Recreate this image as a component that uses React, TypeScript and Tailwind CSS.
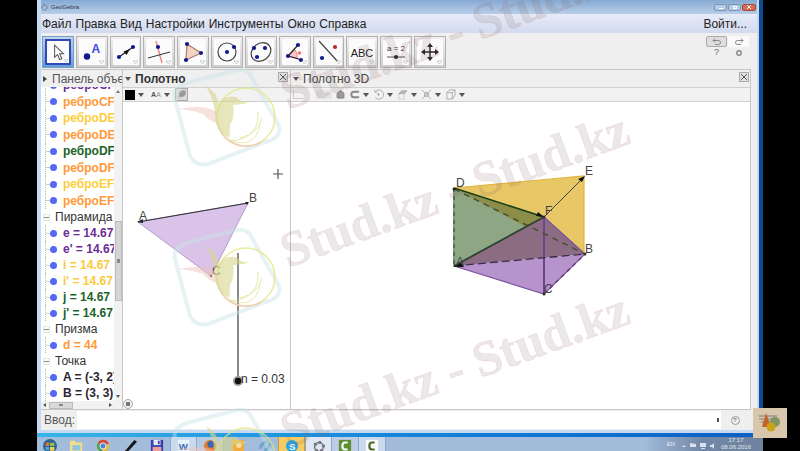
import React from "react";
import { House } from "lucide-react";

const NAVY = "#101a8c";

function Dot({ x, y, c = NAVY }: { x: number; y: number; c?: string }) {
  return <circle cx={x} cy={y} r="2.1" fill={c} />;
}

const tools: { name: string; icon: React.ReactNode }[] = [
  {
    name: "Перемещать",
    icon: <path d="M9 5v14l3.500-3 2.500 6 2.500-1-2.500-6h4.500z" fill="#fff" stroke="#555" strokeWidth="1.200" />,
  },
  {
    name: "Точка",
    icon: (
      <>
        <circle cx="8" cy="17.500" r="3.200" fill={NAVY} />
        <text x="12.500" y="14" fontSize="12" fontWeight="bold" fill="#3a48e8">A</text>
      </>
    ),
  },
  {
    name: "Прямая",
    icon: (
      <>
        <path d="M6 18 20 8" stroke="#222" strokeWidth="1.200" />
        <path d="m10.500 12.500 6.500-2.500-3.500 6z" fill="#111" />
        <Dot x={6} y={18} />
        <Dot x={20} y={8} />
      </>
    ),
  },
  {
    name: "Перпендикулярная прямая",
    icon: (
      <>
        <path d="m10 2 6 22" stroke="#f08a84" strokeWidth="1.500" />
        <path d="m2 19 22-6" stroke="#333" />
        <Dot x={12} y={8} />
      </>
    ),
  },
  {
    name: "Многоугольник",
    icon: (
      <>
        <path d="M7 5 21 14 6 21z" fill="#f3d5c8" stroke="#b07c68" strokeWidth="1.200" />
        <Dot x={7} y={5} />
        <Dot x={21} y={14} />
        <Dot x={6} y={21} />
      </>
    ),
  },
  {
    name: "Окружность",
    icon: (
      <>
        <circle cx="13" cy="13" r="9" fill="none" stroke="#444" strokeWidth="1.200" />
        <Dot x={13} y={13} />
        <Dot x={20} y={8} />
      </>
    ),
  },
  {
    name: "Эллипс",
    icon: (
      <>
        <ellipse cx="13" cy="13" rx="10.500" ry="8.500" transform="rotate(-38 13 13)" fill="none" stroke="#444" strokeWidth="1.200" />
        <Dot x={6} y={9} />
        <Dot x={17} y={9} />
        <Dot x={9} y={18} />
      </>
    ),
  },
  {
    name: "Угол",
    icon: (
      <>
        <path d="M6 17 13 11q3 3 2 8z" fill="#f9c7c7" stroke="#e88" />
        <path d="M16 6 6 17l14 4" fill="none" stroke="#222" strokeWidth="1.200" />
        <circle cx="17.500" cy="14" r="1.800" fill="#ee7777" />
        <Dot x={16} y={6} />
        <Dot x={6} y={17} />
        <Dot x={19} y={21} />
      </>
    ),
  },
  {
    name: "Отражение",
    icon: (
      <>
        <path d="M3 2 23 24" stroke="#444" strokeWidth="1.200" />
        <Dot x={19} y={8} c="#b03020" />
        <Dot x={6} y={19} />
      </>
    ),
  },
  {
    name: "Текст",
    icon: <text x="13" y="17.500" fontSize="11" textAnchor="middle" fill="#222">ABC</text>,
  },
  {
    name: "Ползунок",
    icon: (
      <>
        <text x="13" y="12" fontSize="8" textAnchor="middle" fill="#333">a = 2</text>
        <path d="M4 18h18" stroke="#555" />
        <circle cx="13" cy="18" r="2" fill="#222" />
      </>
    ),
  },
  {
    name: "Переместить полотно",
    icon: (
      <>
        <path d="M13 7v12M7 13h12" stroke="#222" strokeWidth="1.400" />
        <path d="m13 4 3 4h-6zM13 22l3-4h-6zM4 13l4-3v6zM22 13l-4-3v6z" fill="#222" />
      </>
    ),
  },
];

function ToolBar() {
  return (
    <div className="flex h-[36px] shrink-0 items-start justify-between pt-[3px] pr-[2px] pl-px">
      <div className="flex w-[404px] gap-[2px]">
        {tools.map((t, i) => (
          <button
            key={t.name}
            aria-label={t.name}
            className={
              i === 0
                ? "flex h-8 flex-1 items-center justify-center border border-[#7d9cc0] bg-gradient-to-b from-[#bcd5ee] to-[#5d9fdc]"
                : "flex h-8 flex-1 items-center justify-center border border-[#b3b3b3] bg-gradient-to-b from-[#efefef] to-[#cfcfcf]"
            }
          >
            <svg
              viewBox="0 0 26 26"
              className={i === 0 ? "size-[26px] border-2 border-[#3449b4] bg-[#fbfbfb]" : "size-[26px] bg-[#fbfbfb]"}
            >
              {t.icon}
              <path d="M20 22h5l-2.500 3z" fill="#fff" stroke="#bbb" strokeWidth=".7" />
            </svg>
          </button>
        ))}
      </div>
      <div className="grid grid-cols-2 gap-x-px text-[#666]">
        <button aria-label="Отменить" className="flex h-[11px] w-[21px] items-center justify-center rounded-xs border border-[#aaa] bg-[#dedede]">
          <svg viewBox="0 0 10 8" className="h-2 w-[10px]" fill="none" stroke="#888"><path d="M1 2.500h5.500a2 2 0 0 1 0 4H3M3 .500 1 2.500l2 2" /></svg>
        </button>
        <button aria-label="Повторить" className="flex h-[11px] w-[21px] items-center justify-center bg-[#fafafa]">
          <svg viewBox="0 0 10 8" className="h-2 w-[10px]" fill="none" stroke="#888"><path d="M9 2.500H3.500a2 2 0 0 0 0 4H7M7 .500l2 2-2 2" /></svg>
        </button>
        <button aria-label="Справка" className="h-[11px] text-[9px] leading-[11px]">?</button>
        <button aria-label="Параметры" className="flex h-[11px] items-center justify-center">
          <svg viewBox="0 0 8 8" className="size-2"><circle cx="4" cy="4" r="2.200" fill="none" stroke="#888" strokeWidth="1.400" /></svg>
        </button>
      </div>
    </div>
  );
}

function Caret() {
  return <svg viewBox="0 0 6 4" className="h-1 w-[6px] shrink-0"><path d="M0 0h6L3 4z" fill="#555" /></svg>;
}

function CloseBox({ label }: { label: string }) {
  return (
    <button aria-label={label} className="mb-1 ml-auto size-[10px] shrink-0 border border-[#aaa] bg-[#e2e2e2]">
      <svg viewBox="0 0 8 8" className="size-2"><path d="m1 1 6 6m0-6L1 7" stroke="#555" /></svg>
    </button>
  );
}

type Item = { text: string; color: string };

const edges: Item[] = [
  { text: "реброCF", color: "text-[#6a2e96]" },
  { text: "реброCF", color: "text-[#ff993a]" },
  { text: "реброDE", color: "text-[#fbcf3c]" },
  { text: "реброDE", color: "text-[#ff993a]" },
  { text: "реброDF", color: "text-[#1b6429]" },
  { text: "реброDF", color: "text-[#ff993a]" },
  { text: "реброEF", color: "text-[#fbcf3c]" },
  { text: "реброEF", color: "text-[#ff993a]" },
];

const groups: { title: string; items: Item[] }[] = [
  {
    title: "Пирамида",
    items: [
      { text: "e = 14.67", color: "text-[#6a2e96]" },
      { text: "e' = 14.67", color: "text-[#6a2e96]" },
      { text: "i = 14.67", color: "text-[#fbc93c]" },
      { text: "i' = 14.67", color: "text-[#fbc93c]" },
      { text: "j = 14.67", color: "text-[#1b6429]" },
      { text: "j' = 14.67", color: "text-[#1b6429]" },
    ],
  },
  { title: "Призма", items: [{ text: "d = 44", color: "text-[#ff993a]" }] },
  {
    title: "Точка",
    items: [
      { text: "A = (-3, 2)", color: "text-[#2b2530]" },
      { text: "B = (3, 3)", color: "text-[#2b2530]" },
    ],
  },
];

function Row({ item }: { item: Item }) {
  return (
    <li className="flex h-4 items-center pl-1 text-[12px] leading-4 font-bold whitespace-nowrap">
      <span className="h-full shrink-0 border-l border-dotted border-[#bbb]" />
      <span className="w-1 shrink-0 border-t border-[#ccc]" />
      <span className="size-[7px] shrink-0 rounded-full bg-[#5468f4]" />
      <span className={`ml-[6px] shrink-0 ${item.color}`}>{item.text}</span>
    </li>
  );
}

function Algebra() {
  return (
    <section className="flex w-[82px] shrink-0 flex-col border-r border-[#c6c6c6] bg-white">
      <header className="flex h-[17px] shrink-0 items-center gap-[5px] overflow-hidden bg-[#efefef] pl-[2px] text-[12px] whitespace-nowrap text-[#555]">
        <svg viewBox="0 0 4 6" className="h-[6px] w-1 shrink-0"><path d="M0 0v6l4-3z" fill="#444" /></svg>
        <span>Панель объектов</span>
      </header>
      <div className="flex min-h-0 flex-1">
        <div className="flex min-w-0 flex-1 flex-col justify-end overflow-hidden">
          <ul className="flex h-[132px] shrink-0 flex-col justify-between">
            {edges.map((e, i) => <Row key={i} item={e} />)}
          </ul>
          {groups.map((g) => (
            <div key={g.title} className="shrink-0">
              <h3 className="flex h-4 items-center gap-[5px] pl-[2px] text-[12px] leading-4 text-[#333]">
                <span className="flex size-[7px] shrink-0 items-center border border-[#e2e2e2]"><i className="h-px w-full bg-[#888]" /></span>
                {g.title}
              </h3>
              <ul>{g.items.map((e) => <Row key={e.text} item={e} />)}</ul>
            </div>
          ))}
        </div>
        <div className="flex w-2 shrink-0 flex-col items-center bg-[#f2f2f2] py-[3px]">
          <svg viewBox="0 0 4 3" className="h-[3px] w-1 shrink-0"><path d="M0 3h4L2 0z" fill="#777" /></svg>
          <div className="mt-32 flex h-20 w-[7px] shrink-0 items-center justify-center border border-[#bbb] bg-[#d5d5d5]"><i className="h-1 w-[3px] bg-[#888]" /></div>
          <svg viewBox="0 0 4 3" className="mt-auto h-[3px] w-1 shrink-0"><path d="M0 0h4L2 3z" fill="#555" /></svg>
        </div>
      </div>
      <div className="flex h-2 shrink-0 items-center bg-[#f2f2f2] px-[2px]">
        <svg viewBox="0 0 3 4" className="h-1 w-[3px]"><path d="M3 0v4L0 2z" fill="#555" /></svg>
        <div className="ml-[3px] flex h-[7px] w-6 items-center justify-center border border-[#bbb] bg-[#d9d9d9]"><i className="h-[2px] w-1 bg-[#888]" /></div>
        <svg viewBox="0 0 3 4" className="mr-2 ml-auto h-1 w-[3px]"><path d="M0 0v4l3-2z" fill="#555" /></svg>
      </div>
    </section>
  );
}

function Plane() {
  return (
    <section className="flex w-[168px] shrink-0 flex-col border-r border-[#c6c6c6]">
      <header className="flex h-[17px] shrink-0 items-center gap-1 bg-[#efefef] px-[2px] text-[12px] font-bold text-[#333]">
        <Caret />
        <span>Полотно</span>
        <CloseBox label="Закрыть полотно" />
      </header>
      <div className="flex h-[15px] shrink-0 items-center gap-[3px] border-y border-[#cfcfcf] bg-[#f2f2f2] pl-[2px]">
        <button aria-label="Цвет" className="size-[10px] bg-black" />
        <Caret />
        <button aria-label="Размер шрифта" className="ml-1 text-[7px] leading-none font-bold text-[#555]">A<span className="text-[#aaa]">A</span></button>
        <Caret />
        <button aria-label="Закрепить" className="ml-[2px] flex size-[13px] items-center justify-center border border-[#aaa] bg-[#dadada]">
          <svg viewBox="0 0 10 10" className="size-[9px]"><path d="M5 1h4v4L7 7H3V3zM3 7 1 9" fill="#999" stroke="#999" /></svg>
        </button>
      </div>
      <div className="relative min-h-0 flex-1 bg-white">
        <svg viewBox="123 102 167 307" preserveAspectRatio="xMinYMin slice" className="absolute size-full">
          <path d="M138 222 248 203 211 276z" fill="#d9c3e8" stroke="#b79ace" />
          <path d="M138 222 248 203" stroke="#333" strokeWidth="1.200" />
          <path d="m137 222 6-3v4zM249 202l-4 0 2 3z" fill="#222" />
          <circle cx="211" cy="276" r="1.300" fill="#444" />
          <g fontSize="12" fill="#444">
            <text x="139" y="220">A</text>
            <text x="249" y="202">B</text>
            <text x="212" y="275">C</text>
          </g>
          <path d="M273 174h10M278 169v10" stroke="#555" strokeWidth="1.200" />
          <path d="M238 253v125" stroke="#8a8a8a" strokeWidth="2" />
          <circle cx="238" cy="381" r="5" fill="#999" />
          <circle cx="238" cy="381" r="3.200" fill="#111" />
          <circle cx="128" cy="404" r="4.500" fill="#f2f2f2" stroke="#aaa" />
          <path d="M126 402h4v4h-4z" fill="#777" />
        </svg>
        <label htmlFor="n" className="absolute top-[269px] left-[118px] text-[12px] leading-4 text-[#333]">n = 0.03</label>
        <input id="n" type="range" min="0" max="1" step="0.01" defaultValue="0.03" className="absolute top-[150px] left-[109px] h-[135px] w-3 opacity-0 [direction:rtl] [writing-mode:vertical-lr]" />
      </div>
    </section>
  );
}

const viewMenus: { name: string; icon: React.ReactNode }[] = [
  { name: "Привязка", icon: <path d="M11 3H5.500a3 3 0 0 0 0 6H11" strokeWidth="2" stroke="#888" /> },
  { name: "Вращение", icon: <><path d="M2.500 3a5 5 0 1 1 0 6M2 1v2.500h3" /><circle cx="6" cy="6" r="1" fill="#888" stroke="none" /></> },
  { name: "Направление вида", icon: <><path d="M2 5v6h6V5z" strokeOpacity=".5" /><path d="m2 5 3-3h6L8 5z" fill="#bbb" /></> },
  { name: "Отсечение", icon: <><path d="m1 1 3 3m4 4 3 3m0-10L8 4M4 8l-3 3" /><path d="M4 4h4v4H4z" fill="#ccc" /></> },
  { name: "Проекция", icon: <path d="M2 4v7h6V4zM2 4l3-3h6v6l-3 4M8 4l3-3" /> },
];

function Space() {
  return (
    <section className="flex min-w-0 flex-1 flex-col">
      <header className="flex h-[17px] shrink-0 items-center gap-1 bg-[#efefef] pr-px pl-[2px] text-[12px] text-[#444]">
        <Caret />
        <span>Полотно 3D</span>
        <CloseBox label="Закрыть полотно 3D" />
      </header>
      <div className="flex h-[15px] shrink-0 items-center border-y border-[#cfcfcf] bg-[#f2f2f2] pl-[2px]">
        <button aria-label="Оси" className="h-[9px] w-[11px] border-b border-l border-[#ccc]" />
        <button aria-label="Сетка" className="ml-3 h-[9px] w-4 bg-[#e4e4e4]" />
        <button aria-label="Исходный вид" className="ml-1"><House size={9} strokeWidth={3} fill="#999" className="text-[#888]" /></button>
        <div className="ml-1 flex">
          {viewMenus.map(({ name, icon }) => (
            <button key={name} aria-label={name} className="flex w-6 items-center gap-[3px]">
              <svg viewBox="0 0 12 12" className="size-[11px]" fill="none" stroke="#aaa">{icon}</svg>
              <Caret />
            </button>
          ))}
        </div>
      </div>
      <div className="relative min-h-0 flex-1 bg-white">
        <svg viewBox="291 102 460 307" preserveAspectRatio="xMinYMin slice" className="absolute size-full">
          <path d="M454 188 584 176V254L544 217z" fill="#e8c866" />
          <path d="M454 188 544 217 585 254z" fill="#b9a455" />
          <path d="M454 188 544 217 454 266z" fill="#8fa684" />
          <path d="M454 188 544 217 526 227z" fill="#8b8d48" />
          <path d="M454 266 585 254 544 294z" fill="#b793cb" />
          <path d="M454 266 544 217 585 254z" fill="#8c6c82" />
          <path d="M544 217V294" stroke="#6d4490" strokeWidth="2" />
          <path d="M454 266 544 294 585 254 544 217" fill="none" stroke="#7d52a0" strokeWidth="1.200" />
          <path d="M454 188 584 176V254" fill="none" stroke="#e0b53c" strokeWidth="1.200" />
          <path d="M454 188V266" stroke="#7c9c78" strokeWidth="2" />
          <path d="M454 188V266" stroke="#47604a" strokeWidth="1.500" strokeDasharray="4 4" />
          <path d="M454 189 585 254" stroke="#46502c" strokeWidth="1.500" strokeDasharray="6 5" />
          <path d="M454 266 585 254" stroke="#3d2b4d" strokeWidth="1.300" strokeDasharray="8 4" />
          <path d="M544 294 585 254" stroke="#62407c" strokeWidth="1.500" strokeDasharray="4 4" />
          <path d="M454 188 544 217" stroke="#173f17" strokeWidth="1.500" />
          <path d="M454 266 544 217" stroke="#2b4230" strokeWidth="1.800" />
          <path d="M544 217 584 177" stroke="#444" />
          <path d="m585 176-3 6-4-3zM544 217l-8-1 2-4zM453 267l8-4 3 4z" fill="#111" />
          <circle cx="454" cy="189" r="1.500" fill="#222" />
          <circle cx="544" cy="217" r="1.500" fill="#432050" />
          <circle cx="585" cy="254" r="1.500" fill="#333" />
          <circle cx="544" cy="294" r="1.500" fill="#333" />
          <g fontSize="12" fill="#444">
            <text x="456" y="187">D</text>
            <text x="585" y="175">E</text>
            <text x="545" y="215">F</text>
            <text x="456" y="266">A</text>
            <text x="585" y="253">B</text>
            <text x="544" y="293">C</text>
          </g>
        </svg>
      </div>
    </section>
  );
}

const apps: { name: string; cell: string; icon: React.ReactNode }[] = [
  { name: "Пуск", cell: "", icon: <><circle cx="8" cy="8" r="8" fill="#2d6592" /><path d="M3 5q2-2 4-1v4H3z" fill="#e8713a" /><path d="M8 4q2 1 5 0v4H8z" fill="#8fc346" /><path d="M3 9h4v4q-2-1-4 0z" fill="#4ba4e0" /><path d="M8 9h5v4q-2 1-5 0z" fill="#f6cd45" /></> },
  { name: "Проводник", cell: "", icon: <><path d="M1 2h6l1 2h7v12H1z" fill="#f3dc8c" /><path d="M4 7h9v6H4z" fill="#8cc5dc" /></> },
  { name: "Chrome", cell: "", icon: <><circle cx="8" cy="8" r="7" fill="#e5bd3c" /><path d="M8 8 2 4.500A7 7 0 0 1 14.500 5z" fill="#d64a3c" /><path d="M8 8 2 4.500A7 7 0 0 0 7 15z" fill="#50a055" /><circle cx="8" cy="8" r="3.500" fill="#4d86d8" stroke="#fff" /></> },
  { name: "Перо", cell: "", icon: <path d="M2 14 13 1l3 2L6 14l-5 2z" fill="#151515" /> },
  { name: "Диск", cell: "", icon: <><path d="M1 1h14v15H1z" fill="#3142ae" /><path d="M4 1h8v6H4z" fill="#e6e9f6" /><path d="M9 2h2v4H9z" fill="#3142ae" /><path d="M3 9h10v7H3z" fill="#ef9b9b" /></> },
  { name: "Word", cell: "bg-[#c9d9ee] border-x border-[#8fa8c8]", icon: <><path d="M1 1h13v15H1z" fill="#e8f0fb" /><text x="2" y="12" fontSize="11" fontWeight="bold" fill="#3c68b0">W</text></> },
  { name: "Firefox", cell: "bg-[#b9cbe4] border-r border-[#8fa8c8]", icon: <><circle cx="8" cy="8" r="7" fill="#e57c32" /><circle cx="9" cy="6" r="4" fill="#3e68ad" /></> },
  { name: "Рисунки", cell: "", icon: <><path d="M1 1h14v15H1z" fill="#efab42" /><circle cx="9" cy="7" r="3" fill="#f6e1a4" /></> },
  { name: "Обновление", cell: "", icon: <path d="M3 11q0-6 7-8M13 5q1 6-6 8" fill="none" stroke="#6aa5cb" strokeWidth="3" /> },
  { name: "Skype", cell: "bg-[#f5cb62] border-x border-[#c99d3c]", icon: <><circle cx="8" cy="8" r="7" fill="#28a6df" /><text x="4.500" y="12" fontSize="11" fontWeight="bold" fill="#fff">S</text></> },
  { name: "GeoGebra", cell: "bg-[#dfe7f2] border-x border-[#8fa8c8]", icon: <><circle cx="8" cy="9" r="5" fill="none" stroke="#555" strokeWidth="1.300" /><g fill="#778"><circle cx="4" cy="6" r="2" /><circle cx="9" cy="4" r="2" /><circle cx="13" cy="8" r="2" /><circle cx="11" cy="13" r="2" /><circle cx="5" cy="13" r="2" /></g></> },
  { name: "Camtasia", cell: "bg-[#bccde5] border-r border-[#8fa8c8]", icon: <><path d="M1 1h14v15H1z" fill="#5f8f30" /><path d="M11 4H8Q5 4 5 8t3 4h3" fill="none" stroke="#fff" strokeWidth="2.500" /></> },
  { name: "Запись", cell: "bg-[#cbd8ea] border-r border-[#8fa8c8]", icon: <><path d="M1 1h14v15H1z" fill="#f8f8f8" /><path d="M11 4H8Q5 4 5 8t3 4h3" fill="none" stroke="#476b24" strokeWidth="2.500" /></> },
];

function TaskBar() {
  return (
    <footer className="flex h-[14px] shrink-0 items-start overflow-hidden bg-[#a3bcdb]">
      {apps.map((a, i) => (
        <button key={a.name} aria-label={a.name} className={`flex h-4 shrink-0 justify-center pt-[2px] ${i === 0 ? "w-[25px]" : "w-[27px]"} ${a.cell}`}>
          <svg viewBox="0 0 16 16" className="size-[14px]">{a.icon}</svg>
        </button>
      ))}
      <div className="ml-auto flex h-full items-start gap-[6px] bg-gradient-to-r from-[#a3bcdb] via-[#7187a5] to-[#6f83a0] pr-3 pl-6 text-white/80">
        <span className="pt-[3px] text-[6px] leading-[8px]">EN</span>
        <svg viewBox="0 0 34 8" className="mt-[5px] h-2 w-[34px]" fill="#dbe3ee">
          <path d="m1 5 2-2 2 2zM9 1l6 1v3H9zM19 1h6v4h-6zM20 6h4v1h-4zM29 3h2l2-2v6l-2-2h-2z" />
        </svg>
        <p className="text-center text-[6px] leading-[7px]">17:17<br />08.06.2016</p>
      </div>
    </footer>
  );
}

function Emblem({ y }: { y: number }) {
  return (
    <g transform={`translate(0 ${y})`} fill="none">
      <path d="M190 14 237 2Q248 0 252 10L278 56Q283 67 271 72L208 96Q196 99 190 88L175 31Q172 19 190 14Z" stroke="#c8e2e6" strokeOpacity=".45" strokeWidth="4" />
      <circle cx="246" cy="49" r="29" stroke="#e0e67a" strokeOpacity=".75" strokeWidth="1.500" />
      <path d="M219 60a29 29 0 0 0 42 14" stroke="#f0c4c4" strokeOpacity=".8" strokeWidth="1.500" />
      <path d="M258 44q2 18-14 26-8 4-16 2 28 10 32-16M240 70q18-4 22-20" stroke="#dfe08a" strokeOpacity=".7" />
      <path d="M206 18q11 6 13 18 4-9 17-7 6 7 16 5-12 3-19 3 2 12-3 20 0 9-1 13-14-7-14-22 0-14-9-30z" fill="#d7d58c" fillOpacity=".6" />
      <path d="M178 41q28-5 38 3l1 11q-8-2-14-9-10-4-25-5z" fill="#edc3bb" fillOpacity=".5" />
    </g>
  );
}

function Watermark() {
  return (
    <svg aria-hidden="true" viewBox="0 0 800 451" preserveAspectRatio="xMinYMin slice" className="pointer-events-none absolute inset-0 size-full">
      {[0, 160, 340].map((y) => <Emblem key={y} y={68 + y} />)}
      <g className="font-['Liberation_Serif',serif]" fontSize="50" fontWeight="bold" fill="#6b5c5c" fillOpacity=".14" stroke="#e07070" strokeOpacity=".14" strokeWidth=".8">
        {[110, 268, 448].map((y) => (
          <text key={y} transform={`translate(288 ${y}) rotate(-20)`}>Stud.kz - Stud.kz</text>
        ))}
      </g>
    </svg>
  );
}

const menu = ["Файл", "Правка", "Вид", "Настройки", "Инструменты", "Окно", "Справка"];

export default function App() {
  return (
    <div className="relative h-screen overflow-hidden bg-black pr-[37px] pl-[37px] font-['Liberation_Sans',Arial,sans-serif]">
      <div className="flex h-full flex-col">
        <div className="flex min-h-0 flex-1 flex-col border-r-4 border-[#0b4a94] bg-[#c5daf0] pr-[2px] pl-1">
          <div className="flex h-[14px] shrink-0 items-center gap-[3px] bg-gradient-to-b from-[#86a9d3] to-[#b8cee9] text-[6px] text-[#334]">
            <svg viewBox="0 0 8 8" className="size-[7px]" fill="none" stroke="#556"><circle cx="4" cy="4" r="3" strokeDasharray="2 1" /></svg>
            <span>GeoGebra</span>
            <div className="mr-px ml-auto flex gap-px">
              <button aria-label="Свернуть" className="flex h-[7px] w-[13px] items-end justify-center rounded-xs border border-[#7894b8] bg-[#b6cbe4] pb-px"><i className="h-px w-1 bg-white" /></button>
              <button aria-label="Развернуть" className="flex h-[7px] w-[13px] items-center justify-center rounded-xs border border-[#7894b8] bg-[#b6cbe4]"><i className="h-[3px] w-1 border border-white" /></button>
              <button aria-label="Закрыть" className="flex h-[7px] w-[14px] items-center justify-center rounded-xs border border-[#a44c38] bg-[#d66a50]"><svg viewBox="0 0 4 4" className="size-1"><path d="m0 0 4 4m0-4L0 4" stroke="#fff" /></svg></button>
            </div>
          </div>
          <nav className="flex h-[19px] shrink-0 items-center gap-1 bg-gradient-to-b from-[#e6ebf7] to-[#d2daef] pr-[10px] pl-px text-[12px] text-[#222]">
            {menu.map((m) => <button key={m}>{m}</button>)}
            <button className="ml-auto">Войти...</button>
          </nav>
          <div className="flex min-h-0 flex-1 flex-col bg-[#efefef] pr-[6px]">
            <ToolBar />
            <main className="flex min-h-0 flex-1 border border-l-0 border-[#c6c6c6]">
              <Algebra />
              <Plane />
              <Space />
            </main>
            <div className="flex h-5 shrink-0 items-center text-[12px] text-[#555]">
              <label htmlFor="cmd" className="w-9 pl-[3px]">Ввод:</label>
              <input id="cmd" className="h-[18px] min-w-0 flex-1 bg-white px-1 outline-none" />
              <span className="-ml-1 h-1 w-[2px] bg-[#555]" />
              <button aria-label="Справка по вводу" className="flex w-8 justify-center">
                <span className="size-[9px] rounded-full border border-[#999] text-center text-[6px] leading-[7px]">?</span>
              </button>
            </div>
          </div>
          <div className="h-[3px] shrink-0" />
        </div>
        <div className="h-1 shrink-0 bg-gradient-to-r from-[#36b5e8] via-[#1484dc] to-[#0a5fc4]" />
        <TaskBar />
      </div>
      <Watermark />
      <div className="absolute right-[13px] bottom-[13px] flex h-[30px] w-[34px] items-center justify-center bg-[#d9c7ac]">
        <svg viewBox="0 0 24 20" className="h-5 w-6">
          <path d="M1 3h18M1 6h20M3 9h16" stroke="#667" strokeWidth=".8" />
          <circle cx="17" cy="9" r="5" fill="#7d9663" />
          <path d="M8 0 13 14H4z" fill="#c4622a" />
          <circle cx="13" cy="14" r="4.500" fill="#c8a418" />
        </svg>
      </div>
    </div>
  );
}
